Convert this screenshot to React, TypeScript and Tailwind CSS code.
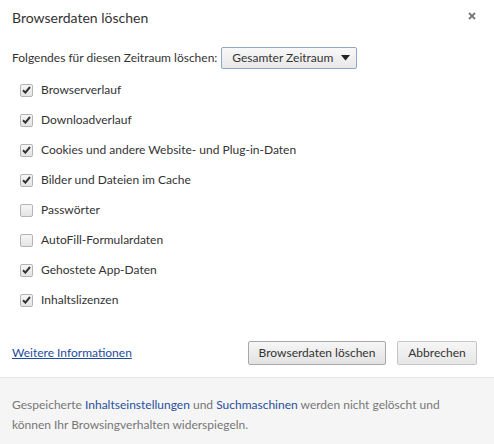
import { useState } from 'react';

interface Option {
  id: string;
  label: string;
  checked: boolean;
}

const initialOptions: Option[] = [
  { id: 'history', label: 'Browserverlauf', checked: true },
  { id: 'downloads', label: 'Downloadverlauf', checked: true },
  { id: 'cookies', label: 'Cookies und andere Website- und Plug-in-Daten', checked: true },
  { id: 'cache', label: 'Bilder und Dateien im Cache', checked: true },
  { id: 'passwords', label: 'Passwörter', checked: false },
  { id: 'autofill', label: 'AutoFill-Formulardaten', checked: false },
  { id: 'hosted', label: 'Gehostete App-Daten', checked: true },
  { id: 'licenses', label: 'Inhaltslizenzen', checked: true },
];

function CheckBox({ checked }: { checked: boolean }) {
  return (
    <span className="flex h-[13px] w-[13px] shrink-0 items-center justify-center rounded-[2px] border border-[#b4b4b4] bg-gradient-to-b from-[#f6f6f6] to-[#e4e4e4]">
      {checked && (
        <svg width="9" height="8" viewBox="0 0 9 8">
          <path d="M1 4.2 L3.4 6.6 L8 1" fill="none" stroke="#333" strokeWidth="2" />
        </svg>
      )}
    </span>
  );
}

export default function App() {
  const [options, setOptions] = useState(initialOptions);

  const toggle = (id: string) =>
    setOptions((prev) => prev.map((o) => (o.id === id ? { ...o, checked: !o.checked } : o)));

  return (
    <div
      className="flex h-[444px] w-[494px] flex-col bg-white text-[12px] text-[#333]"
      style={{ fontFamily: 'Lato, "Noto Sans", sans-serif' }}
    >
      <div className="flex-1 px-3">
        {/* Header */}
        <div className="flex items-start justify-between pt-[8px]">
          <h1 className="text-[14px] leading-[20px] text-[#333]">Browserdaten löschen</h1>
          <button className="mr-[6px] mt-[4px]">
            <svg width="8" height="8" viewBox="0 0 8 8">
              <path d="M1 1 L7 7 M7 1 L1 7" stroke="#777" strokeWidth="1.8" />
            </svg>
          </button>
        </div>

        {/* Time range */}
        <div className="mt-[19px] flex items-center gap-[4px] whitespace-nowrap">
          <span>Folgendes für diesen Zeitraum löschen:</span>
          <div className="flex h-[22px] w-[136px] items-center justify-between rounded-[2px] border border-[#8ea7c9] bg-gradient-to-b from-[#f8f8f8] to-[#e8e8e8] pl-[10px] pr-[6px]">
            <span>Gesamter Zeitraum</span>
            <svg width="9" height="6" viewBox="0 0 9 6">
              <path d="M0 0 H9 L4.5 5.5 Z" fill="#222" />
            </svg>
          </div>
        </div>

        {/* Options */}
        <ul className="mt-[6px] flex flex-col pl-[8px]">
          {options.map((o) => (
            <li
              key={o.id}
              className="flex h-[30px] cursor-default items-center gap-[8px]"
              onClick={() => toggle(o.id)}
            >
              <CheckBox checked={o.checked} />
              <span>{o.label}</span>
            </li>
          ))}
        </ul>

        {/* Actions */}
        <div className="mt-[26px] flex items-center justify-between pr-[5px]">
          <a href="#" className="text-[#1f4d9c] underline">
            Weitere Informationen
          </a>
          <div className="flex gap-[11px]">
            <button className="h-[24px] w-[138px] rounded-[2px] border border-[#a8a8a8] bg-gradient-to-b from-[#f6f6f6] to-[#e2e2e2]">
              Browserdaten löschen
            </button>
            <button className="h-[24px] w-[80px] rounded-[2px] border border-[#c4c4c4] bg-gradient-to-b from-[#f6f6f6] to-[#e6e6e6]">
              Abbrechen
            </button>
          </div>
        </div>
      </div>

      {/* Footer note */}
      <div className="h-[67px] border-t border-[#e6e6e6] bg-[#f5f5f5] px-3 pt-[17px] leading-[20px] text-[#777]">
        Gespeicherte <a href="#" className="text-[#2a4f9c]">Inhaltseinstellungen</a> und{' '}
        <a href="#" className="text-[#2a4f9c]">Suchmaschinen</a> werden nicht gelöscht und
        <br />
        können Ihr Browsingverhalten widerspiegeln.
      </div>
    </div>
  );
}
